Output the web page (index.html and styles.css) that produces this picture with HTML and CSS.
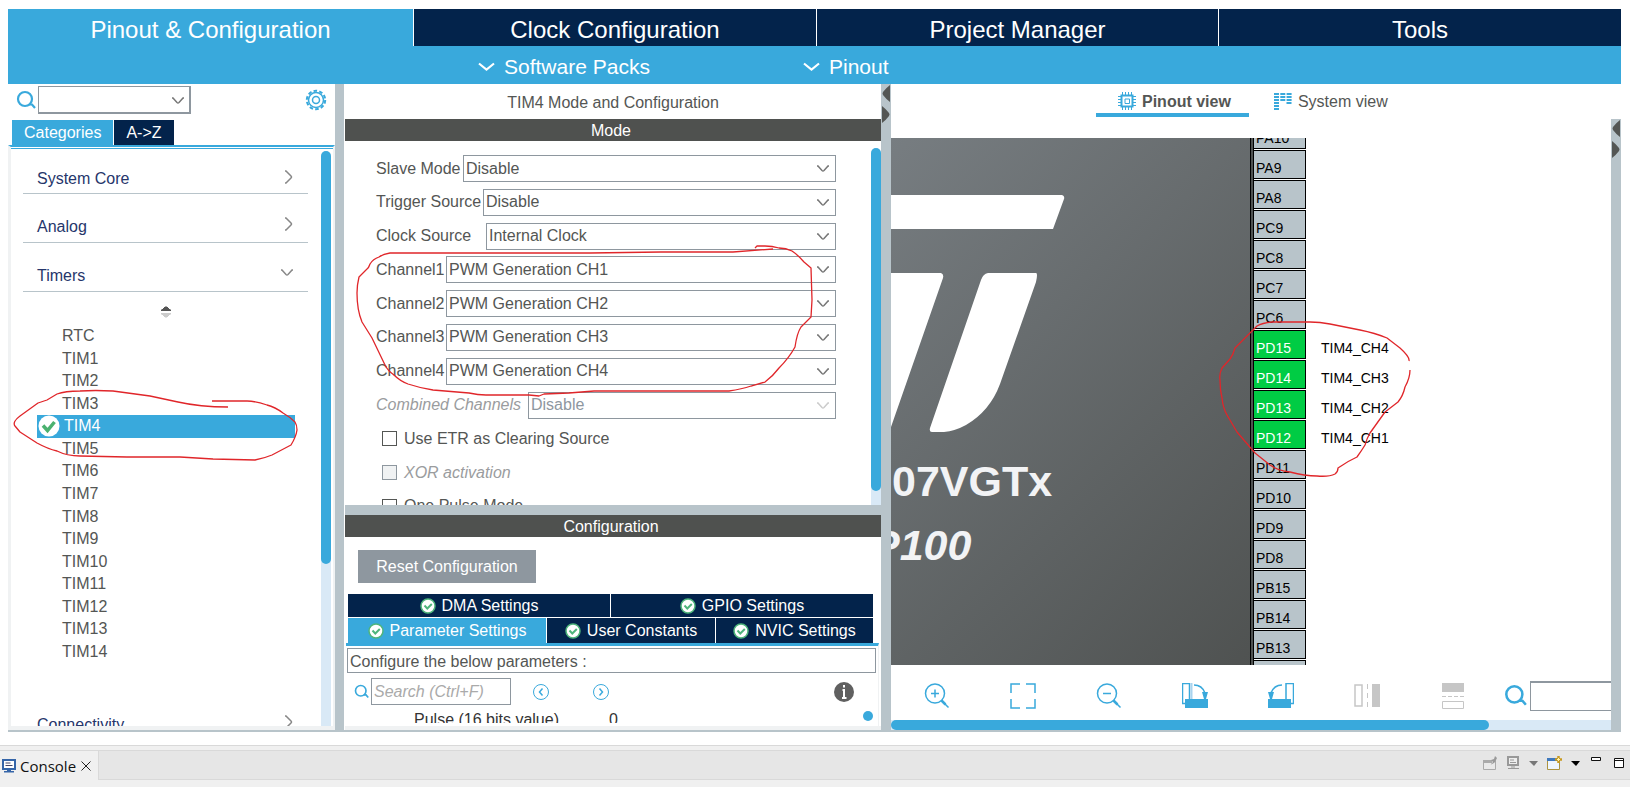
FILE: index.html
```html
<!DOCTYPE html>
<html lang="en">
<head>
<meta charset="utf-8">
<title>Pinout &amp; Configuration</title>
<link rel="stylesheet" href="styles.css">
</head>
<body>
<svg class="defs" aria-hidden="true">
  <symbol id="i-down" viewBox="0 0 14 8"><path d="M1 1h1l4 4.500q1 1 2 0L12 1h1" fill="none" stroke="currentColor" stroke-width="1.500"/></symbol>
  <symbol id="i-right" viewBox="0 0 10 14"><path d="M1 1h1l5 5q1 1 0 2l-5 5H1" fill="none" stroke="currentColor" stroke-width="1.500"/></symbol>
  <symbol id="i-search" viewBox="0 0 20 20"><circle cx="9" cy="9" r="7" fill="none" stroke="#39a9dc" stroke-width="2.200"/><path d="M13 14.500h3l3 3.500" fill="none" stroke="#39a9dc" stroke-width="2.200"/></symbol>
  <symbol id="i-ok" viewBox="0 0 16 16"><circle cx="8" cy="8" r="7" fill="#fff" stroke="#4fb57c" stroke-width="1.500"/><path d="M4.500 7.500l2.800 3 4.500-4.500" fill="none" stroke="#4fb57c" stroke-width="2"/></symbol>
  <symbol id="i-split" viewBox="0 0 10 40"><path d="M9 1v17Q5 15 2 11q-1-1.500 0-3 3-4 7-7zM1 22v17q4-3 7-7 1-1.500 0-3-3-4-7-7z" fill="#545654"/></symbol>
</svg>

<main class="app">
  <nav class="maintabs">
    <button class="maintab active">Pinout &amp; Configuration</button>
    <button class="maintab">Clock Configuration</button>
    <button class="maintab">Project Manager</button>
    <button class="maintab">Tools</button>
  </nav>
  <div class="subbar">
    <button class="submenu packs"><svg width="17" height="10" viewBox="0 0 17 10"><path d="M1 1.500l7.500 6 7.500-6" fill="none" stroke="#fff" stroke-width="2.200"/></svg>Software Packs</button>
    <button class="submenu"><svg width="17" height="10" viewBox="0 0 17 10"><path d="M1 1.500l7.500 6 7.500-6" fill="none" stroke="#fff" stroke-width="2.200"/></svg>Pinout</button>
  </div>

  <div class="workspace">
    <aside class="sidebar">
      <div class="finder">
        <svg width="20" height="20"><use href="#i-search"/></svg>
        <div class="combo finder-combo"><select aria-label="Find peripheral"><option></option></select><svg class="arrow" width="14" height="8"><use href="#i-down"/></svg></div>
        <button class="gear" aria-label="Settings"><svg width="22" height="22" viewBox="0 0 22 22" fill="none" stroke="#39a9dc"><circle cx="11" cy="11" r="9.200" stroke-width="2" stroke-dasharray="3.600 2.200"/><circle cx="11" cy="11" r="7.500" stroke-width="1.500"/><circle cx="11" cy="11" r="3.500" stroke-width="1.500"/></svg></button>
      </div>
      <div class="sidetabs"><button class="sidetab active">Categories</button><button class="sidetab">A-&gt;Z</button></div>
      <div class="tree">
        <div class="tree-body">
          <button class="group">System Core<svg width="10" height="14"><use href="#i-right"/></svg></button>
          <button class="group">Analog<svg width="10" height="14"><use href="#i-right"/></svg></button>
          <button class="group">Timers<svg width="14" height="8"><use href="#i-down"/></svg></button>
          <div class="sorter"><svg width="10" height="12" viewBox="0 0 10 12"><path d="M0 4.500h10V4H9L6 1H4L1 4H0z" fill="#555" stroke="#555"/><path d="M0 7.500h10V8H9l-3 3H4L1 8H0z" fill="#ccc" stroke="#ccc"/></svg></div>
          <ul class="timers">
            <li>RTC</li><li>TIM1</li><li>TIM2</li><li>TIM3</li>
            <li class="selected"><svg width="22" height="22" viewBox="0 0 22 22"><circle cx="11" cy="11" r="10.500" fill="#fff"/><path d="M5 10.500l4.500 5L16.500 7" fill="none" stroke="#4bb16f" stroke-width="3.500"/></svg>TIM4</li>
            <li>TIM5</li><li>TIM6</li><li>TIM7</li><li>TIM8</li><li>TIM9</li><li>TIM10</li><li>TIM11</li><li>TIM12</li><li>TIM13</li><li>TIM14</li>
          </ul>
          <button class="group last">Connectivity<svg width="10" height="14"><use href="#i-right"/></svg></button>
        </div>
        <div class="track"><div class="thumb tree-thumb"></div></div>
      </div>
    </aside>

    <div class="divider"></div>

    <section class="settings">
      <h1 class="title">TIM4 Mode and Configuration</h1>
      <h2 class="bar">Mode</h2>
      <div class="mode">
        <form class="fields">
          <div class="field"><label class="w-slave" for="f1">Slave Mode</label><div class="combo"><select id="f1"><option>Disable</option></select><svg class="arrow" width="14" height="8"><use href="#i-down"/></svg></div></div>
          <div class="field"><label class="w-trig" for="f2">Trigger Source</label><div class="combo"><select id="f2"><option>Disable</option></select><svg class="arrow" width="14" height="8"><use href="#i-down"/></svg></div></div>
          <div class="field"><label class="w-clock" for="f3">Clock Source</label><div class="combo"><select id="f3"><option>Internal Clock</option></select><svg class="arrow" width="14" height="8"><use href="#i-down"/></svg></div></div>
          <div class="field"><label class="w-chan" for="f4">Channel1</label><div class="combo"><select id="f4"><option>PWM Generation CH1</option></select><svg class="arrow" width="14" height="8"><use href="#i-down"/></svg></div></div>
          <div class="field"><label class="w-chan" for="f5">Channel2</label><div class="combo"><select id="f5"><option>PWM Generation CH2</option></select><svg class="arrow" width="14" height="8"><use href="#i-down"/></svg></div></div>
          <div class="field"><label class="w-chan" for="f6">Channel3</label><div class="combo"><select id="f6"><option>PWM Generation CH3</option></select><svg class="arrow" width="14" height="8"><use href="#i-down"/></svg></div></div>
          <div class="field"><label class="w-chan" for="f7">Channel4</label><div class="combo"><select id="f7"><option>PWM Generation CH4</option></select><svg class="arrow" width="14" height="8"><use href="#i-down"/></svg></div></div>
          <div class="field off"><label class="w-comb" for="f8">Combined Channels</label><div class="combo"><select id="f8" disabled><option>Disable</option></select><svg class="arrow" width="14" height="8"><use href="#i-down"/></svg></div></div>
          <div class="field check"><input type="checkbox" id="c1"><label for="c1">Use ETR as Clearing Source</label></div>
          <div class="field check off"><input type="checkbox" id="c2" disabled><label for="c2">XOR activation</label></div>
          <div class="field check"><input type="checkbox" id="c3"><label for="c3">One Pulse Mode</label></div>
        </form>
        <div class="track"><div class="thumb mode-thumb"></div></div>
      </div>
      <div class="hdivider"></div>
      <h2 class="bar">Configuration</h2>
      <div class="config">
        <button class="reset">Reset Configuration</button>
        <div class="ctabs">
          <button class="ctab"><svg width="16" height="16"><use href="#i-ok"/></svg>DMA Settings</button>
          <button class="ctab"><svg width="16" height="16"><use href="#i-ok"/></svg>GPIO Settings</button>
        </div>
        <div class="ctabs second">
          <button class="ctab active"><svg width="16" height="16"><use href="#i-ok"/></svg>Parameter Settings</button>
          <button class="ctab"><svg width="16" height="16"><use href="#i-ok"/></svg>User Constants</button>
          <button class="ctab"><svg width="16" height="16"><use href="#i-ok"/></svg>NVIC Settings</button>
        </div>
        <div class="params">
          <div class="hint">Configure the below parameters :</div>
          <div class="psearch">
            <svg width="15" height="15"><use href="#i-search"/></svg>
            <input type="text" placeholder="Search (Ctrl+F)" aria-label="Search parameters">
            <button class="nav prev" aria-label="Previous"><svg width="18" height="18" viewBox="0 0 18 18" fill="none" stroke="#39a9dc"><circle cx="9" cy="9" r="7.500"/><path d="M10.500 5.500L7.500 9l3 3.500" stroke-width="1.500"/></svg></button>
            <button class="nav" aria-label="Next"><svg width="18" height="18" viewBox="0 0 18 18" fill="none" stroke="#39a9dc"><circle cx="9" cy="9" r="7.500"/><path d="M7.500 5.500l3 3.500-3 3.500" stroke-width="1.500"/></svg></button>
            <button class="nav info" aria-label="Information"><svg width="20" height="20" viewBox="0 0 20 20"><circle cx="10" cy="10" r="10" fill="#606060"/><path d="M10 3v2.500M8.500 8H10v7.500M8 16h4.500" stroke="#fff" stroke-width="2" fill="none"/></svg></button>
          </div>
          <div class="prow"><span class="pname">Pulse (16 bits value)</span><span>0</span><i class="dot"></i></div>
        </div>
      </div>
    </section>

    <div class="divider"><svg width="10" height="40"><use href="#i-split"/></svg></div>

    <section class="viewer">
      <nav class="views">
        <button class="view active"><svg width="18" height="18" viewBox="0 0 18 18" fill="none" stroke="#39a9dc"><path d="M3.500 3.500h11v11h-11z" stroke-width="2"/><path d="M7 7h4.500v4.500H7z"/><path d="M4.500 0v3m3-3v3m3-3v3m3-3v3M4.500 15v3m3-3v3m3-3v3m3-3v3M0 4.500h3m-3 3h3m-3 3h3m-3 3h3M15 4.500h3m-3 3h3m-3 3h3m-3 3h3"/></svg>Pinout view</button>
        <button class="view"><svg width="18" height="18" viewBox="0 0 18 18" fill="none" stroke="#39a9dc" stroke-width="2"><path d="M0 2h18M0 5h18M0 8h18M0 11h5M12.500 11h5.500M0 14h5M0 17h5" stroke-dasharray="5 1.300"/></svg>System view</button>
      </nav>
      <div class="stage">
        <div class="canvas">
          <div class="package">
            <svg class="logo" width="362" height="300" viewBox="0 0 362 300" fill="#fff"><path d="M0 57h171q3 1 2 4l-11 30H0zM0 135h50q3 1 2 5L0 289zM97 135h48q2 0 0 9l-36 102q-10 27-34 41-11 6-22 7H41q-3 0-2-4L90 142q2-6 7-7z"/></svg>
            <span class="part">07VGTx</span>
            <span class="case">P100</span>
          </div>
          <ul class="pins">
            <li><b>PA10</b></li><li><b>PA9</b></li><li><b>PA8</b></li><li><b>PC9</b></li><li><b>PC8</b></li><li><b>PC7</b></li><li><b>PC6</b></li>
            <li class="used"><b>PD15</b><span>TIM4_CH4</span></li><li class="used"><b>PD14</b><span>TIM4_CH3</span></li><li class="used"><b>PD13</b><span>TIM4_CH2</span></li><li class="used"><b>PD12</b><span>TIM4_CH1</span></li>
            <li><b>PD11</b></li><li><b>PD10</b></li><li><b>PD9</b></li><li><b>PD8</b></li><li><b>PB15</b></li><li><b>PB14</b></li><li><b>PB13</b></li><li><b></b></li>
          </ul>
        </div>
        <div class="tools">
          <button aria-label="Zoom in"><svg width="26" height="26" viewBox="0 0 26 26" fill="none" stroke="#39a9dc" stroke-width="1.500"><circle cx="11" cy="10.500" r="9.500"/><path d="M11 6.500v8M7 10.500h8M17.500 17.500l7 7"/><path d="M17.500 17.500l4 4" stroke-width="2.500"/></svg></button>
          <button aria-label="Best fit"><svg width="26" height="26" viewBox="0 0 26 26" fill="none" stroke="#39a9dc" stroke-width="1.500"><path d="M1 10V1h9M16 1h9v9M25 16v9h-9M10 25H1v-9"/></svg></button>
          <button aria-label="Zoom out"><svg width="26" height="26" viewBox="0 0 26 26" fill="none" stroke="#39a9dc" stroke-width="1.500"><circle cx="11" cy="10.500" r="9.500"/><path d="M7 10.500h8M17.500 17.500l7 7"/><path d="M17.500 17.500l4 4" stroke-width="2.500"/></svg></button>
          <button aria-label="Rotate right"><svg width="26" height="26" viewBox="0 0 26 26" fill="none" stroke="#39a9dc"><path d="M.500.500h7v20h-7z" stroke-width="1.500"/><path d="M9.500 0v16" stroke="#a9d3ee" stroke-width="2"/><path d="M3 16h23v9H3z" fill="#39a9dc" stroke="none"/><path d="M12 2q8 0 11 8" stroke-width="1.500"/><path d="M20 9h6l-2 7h-2z" fill="#39a9dc" stroke="none"/></svg></button>
          <button aria-label="Rotate left"><svg width="26" height="26" viewBox="0 0 26 26" fill="none" stroke="#39a9dc"><path d="M18 .500h7.500v20H18z" stroke-width="1.500"/><path d="M0 16h23v9H0z" fill="#39a9dc" stroke="none"/><path d="M14 2Q6 2 3 10" stroke-width="1.500"/><path d="M0 9h6l-2 7H2z" fill="#39a9dc" stroke="none"/></svg></button>
          <button aria-label="Flip horizontally"><svg width="26" height="26" viewBox="0 0 26 26" fill="none" stroke="#c6c6c6"><path d="M1 2h7v21H1z" stroke-width="1.500"/><path d="M13.500 1v23" stroke-dasharray="5 4"/><path d="M18 1h8v23h-8z" fill="#c6c6c6" stroke="none"/></svg></button>
          <button aria-label="Flip vertically"><svg width="26" height="26" viewBox="0 0 26 26" fill="none" stroke="#c6c6c6"><path d="M2 0h22v9H2z" fill="#c6c6c6" stroke="none"/><path d="M2 13.500h22" stroke-dasharray="4 2"/><path d="M2.500 18.500h21v7h-21z"/></svg></button>
          <label class="pinfind"><svg width="23" height="23"><use href="#i-search"/></svg><input type="text" aria-label="Find pin"></label>
        </div>
        <div class="hscroll"><div class="hthumb"></div></div>
        <div class="edge"><svg width="10" height="40"><use href="#i-split"/></svg></div>
      </div>
    </section>
  </div>
</main>

<footer class="console">
  <div class="ctop">
    <div class="ctitle">
      <svg width="14" height="14" viewBox="0 0 14 14"><path d="M1 1h12v9H1z" fill="#fff" stroke="#3565a8" stroke-width="2"/><path d="M3.500 4h5M3.500 6.500h7" stroke="#446"/><path d="M5 10h4v2h3v1.500H2V12h3z" fill="#3565a8"/></svg>
      <span>Console</span>
      <button aria-label="Close"><svg width="10" height="10" viewBox="0 0 10 10"><path d="M.500.500l9 9M9.500.500l-9 9" stroke="#222"/></svg></button>
    </div>
    <div class="cbuttons">
      <svg width="14" height="14" viewBox="0 0 14 14"><path d="M.500 4.500h12v9H.500z" fill="#e9e9e9" stroke="#aaa"/><path d="M0 4h9v3H0z" fill="#aaa"/><path d="M7 9l3-3-2-2 3-1 1-3 2 2-2 4-1 1" fill="#999"/></svg>
      <svg width="14" height="14" viewBox="0 0 14 14"><path d="M2 1h10v8H2z" fill="#eee" stroke="#999" stroke-width="2"/><path d="M4 4h4M4 6.500h6M2 12.500h11M5 11h4" stroke="#999"/></svg>
      <svg width="9" height="5"><path d="M0 0h9L5 5z" fill="#777"/></svg>
      <svg width="15" height="14" viewBox="0 0 15 14"><path d="M.500 2.500h12v11H.500z" fill="#eef6ff" stroke="#ad9440"/><path d="M0 2h10v3H0z" fill="#3f79bd"/><path d="M11.500 0v7M8 3.500h7" stroke="#c99a20" stroke-width="2.500"/><path d="M11.500 2v3M10 3.500h3" stroke="#fff4b0"/></svg>
      <svg width="9" height="5"><path d="M0 0h9L5 5z" fill="#000"/></svg>
      <svg class="min" width="10" height="14"><path d="M.500 1.500h9v3h-9z" fill="#fff" stroke="#111"/></svg>
      <svg width="10" height="12"><path d="M.500 1.500h9v9h-9zM1 3.500h8" fill="#fff" stroke="#111"/></svg>
    </div>
  </div>
  <p class="cmsg">No consoles to display at this time.</p>
</footer>

<svg class="marks" width="1630" height="787" viewBox="0 0 1630 787" fill="none" stroke="#e0262a" stroke-width="1.300" stroke-linejoin="round" aria-hidden="true">
  <path d="M228 407Q200 407 178 402L150 396 113 391Q95 390 80 391 65 391 57 394L47 400 38 403 20 416Q12 422 15 426L20 432 37 443Q48 449 57 451 67 456 80 456L127 457 180 457 213 459 255 460Q265 458 272 455L291 445Q296 437 297 430 297 425 295 422 290 417 283 413 275 407 267 405 255 401 247 401H212"/>
  <path d="M773 249L733 252 661 252 590 253H390Q383 254 379 257 373 259 370 264 369 268 366 270L359 277Q357 285 357 293 357 310 362 322L372 338 385 365Q388 371 394 375 400 381 408 384 420 388 433 390L469 393Q478 395 486 395L529 395 539 396 544 394 569 393 594 391H729Q742 389 751 386L765 382Q773 376 779 368 789 358 795 347 797 333 801 327L811 317 812 300 811 268 804 262Q798 255 792 251 786 248 779 248 772 246 765 246H757L755 248"/>
  <path d="M1409 361Q1410 357 1400 348L1387 338Q1375 333 1360 330L1330 324Q1320 322 1310 322H1272Q1262 323 1257 326L1235 348Q1233 355 1230 359L1222 368Q1219 374 1220 380 1220 390 1222 398 1223 408 1227 415L1237 432 1255 453 1270 465Q1278 471 1290 472 1305 476 1317 476 1329 477 1335 474 1338 472 1338 468 1348 461 1357 457 1362 450 1365 445 1367 438 1370 433L1385 412 1398 402Q1403 396 1405 387 1410 378 1410 370"/>
</svg>
</body>
</html>
```
FILE: styles.css
```css
* { box-sizing: border-box; }

body {
  margin: 0;
  height: 100vh;
  display: flex;
  flex-direction: column;
  overflow: hidden;
  background: #fff;
  color: #545654;
  font: 16px/20px "Liberation Sans", Arial, sans-serif;
}

button, input, select { font: inherit; color: inherit; border-radius: 0; margin: 0; }
button { border: 0; padding: 0; background: none; display: flex; align-items: center; }
ul { list-style: none; margin: 0; padding: 0; }
svg { display: block; flex: none; }
.defs { position: absolute; width: 0; height: 0; }
.marks { position: absolute; left: 0; top: 0; pointer-events: none; }

/* header */
.app { flex: 1; min-height: 0; margin: 9px 9px 13px 8px; display: flex; flex-direction: column; }
.maintabs { display: grid; grid-template-columns: 405fr 402fr 401fr 402fr; gap: 1px; }
.maintab { height: 37px; padding-top: 4px; justify-content: center; background: #03234b; color: #fff; font-size: 24px; }
.maintab.active { background: #39a9dc; }
.subbar { height: 38px; background: #39a9dc; display: flex; padding-left: 470px; }
.submenu { color: #fff; font-size: 21px; gap: 9px; padding-top: 4px; }
.submenu.packs { width: 325px; }

.workspace {
  flex: 1;
  min-height: 0;
  display: grid;
  grid-template-columns: 327px 9px 537px 10px 1fr;
  border-bottom: 2px solid #b8c4ca;
}
.divider { background: #b8c4ca; }

/* drop-downs */
.combo { position: relative; flex: 1; color: #545654; }
.combo select {
  appearance: none;
  display: block;
  width: 100%;
  height: 27px;
  padding: 0 2px;
  border: 1px solid #8e979f;
  background: #fff;
  opacity: 1;
}
.combo .arrow { position: absolute; right: 6px; top: 10px; color: #777; pointer-events: none; }

/* scrollbars */
.track { width: 10px; background: #d9e9f6; border-radius: 5px 5px 0 0; }
.thumb { background: #39a9dc; border-radius: 5px; }
.tree-thumb { height: 413px; }
.mode-thumb { height: 343px; }

/* sidebar */
.sidebar { display: flex; flex-direction: column; min-height: 0; overflow: hidden; }
.finder { display: flex; align-items: center; height: 32px; padding: 0 8px; gap: 2px; }
.finder-combo { flex: none; width: 153px; }
.finder-combo select { border-width: 1px 2px 2px 1px; height: 28px; }
.finder .arrow { top: 11px; }
.gear { margin-left: auto; }
.sidetabs { display: flex; gap: 1px; padding: 4px 4px 0; height: 29px; }
.sidetab { height: 25px; padding: 0 12px; background: #03234b; color: #fff; }
.sidetab.active { background: #39a9dc; }
.tree {
  flex: 1;
  min-height: 0;
  display: flex;
  padding: 4px 2px 0 0;
  border: solid #f0f2f3;
  border-width: 2px 2px 4px 3px;
  border-top-color: #39a9dc;
  box-shadow: inset 0 1px #fff, inset 0 2px #39a9dc;
}
.tree-body { flex: 1; min-width: 0; overflow: hidden; padding: 0 13px 0 12px; }
.group { width: 100%; height: 49px; padding: 17px 14px 0; justify-content: space-between; border-bottom: 1px solid #b8c4ca; color: #26366b; text-align: left; }
.group:first-child { height: 43px; padding-top: 14px; }
.group svg { color: #888; margin-top: -5px; }
.sorter { height: 27px; margin-top: 6px; display: flex; justify-content: center; align-items: center; }
.timers { display: grid; grid-template-rows: repeat(15, 1fr); height: 338px; padding: 0 13px 0 14px; }
.timers li { padding-left: 25px; display: flex; align-items: center; }
.timers .selected { background: #39a9dc; color: #fff; padding-left: 1px; gap: 4px; }
.group.last { margin-top: 29px; }

/* mode and configuration */
.settings { display: flex; flex-direction: column; min-height: 0; overflow: hidden; padding-left: 1px; }
.title { margin: 0; font: inherit; text-align: center; height: 35px; line-height: 37px; }
.bar { margin: 0; background: #4f514f; color: #fff; text-align: center; font: inherit; height: 22px; line-height: 24px; flex: none; padding-right: 4px; }
.mode { height: 364px; flex: none; display: flex; padding-top: 7px; overflow: hidden; }
.fields { flex: 1; height: 372px; padding: 7px 35px 0 31px; display: flex; flex-direction: column; justify-content: space-between; }
.field { display: flex; align-items: center; height: 27px; flex: none; white-space: nowrap; }
.w-slave { width: 87px; }
.w-trig { width: 107px; }
.w-clock { width: 110px; }
.w-chan { width: 70px; }
.w-comb { width: 152px; }
.off label { color: #9a9c9e; font-style: italic; }
.off select { color: #8e979f; }
.off .arrow { color: #ccc; }
.check { padding-left: 6px; gap: 7px; }
.check input { appearance: none; width: 15px; height: 15px; border: 1px solid #545654; background: #fff; }
.check input:disabled { background: #f0f2f3; border-color: #8e979f; }
.hdivider { height: 10px; background: #b8c4ca; flex: none; }
.config { flex: 1; min-height: 0; display: flex; flex-direction: column; padding: 13px 2px 0 1px; border-bottom: 4px solid #f0f2f3; }
.reset { width: 178px; height: 33px; flex: none; margin: 0 0 11px 12px; background: #8e979f; color: #fff; justify-content: center; }
.ctabs { display: grid; grid-template-columns: 1fr 1fr; gap: 1px; margin: 0 6px 1px 2px; height: 23px; flex: none; }
.ctabs.second { grid-template-columns: 198fr 168fr 157fr; height: 25px; margin-bottom: 0; }
.ctab { justify-content: center; gap: 6px; background: #03234b; color: #fff; white-space: nowrap; }
.ctab.active { background: #39a9dc; }
.params { flex: 1; min-height: 0; overflow: hidden; border-top: 3px solid #39a9dc; padding: 2px 2px 0 1px; border-right: 1px solid #f0f2f3; }
.hint { border: 1px solid #8e979f; height: 25px; padding: 0 2px; line-height: 25px; }
.psearch { display: flex; align-items: center; height: 37px; padding: 0 22px 0 7px; }
.psearch input { width: 140px; height: 27px; margin-left: 2px; padding: 0 2px; border: 1px solid #8e979f; font-style: italic; }
.psearch input::placeholder { color: #aaa; opacity: 1; }
.nav { margin-left: 21px; }
.nav + .nav { margin-left: 42px; }
.nav + .info { margin-left: auto; }
.prow { display: flex; height: 13px; overflow: hidden; color: #333; padding: 0 3px 0 67px; }
.pname { width: 195px; }
.dot { width: 10px; height: 10px; border-radius: 5px; background: #39a9dc; margin: 1px 0 0 auto; }

/* chip viewer */
.viewer { display: flex; flex-direction: column; min-width: 0; min-height: 0; }
.views { display: flex; height: 35px; padding-left: 205px; gap: 1px; }
.view { height: 33px; padding: 7px 18px 0 24px; gap: 6px; border-bottom: 4px solid transparent; }
.view svg { margin-top: -3px; }
.view.active { font-weight: bold; border-color: #39a9dc; padding-left: 22px; }
.stage { flex: 1; min-height: 0; display: grid; grid-template-columns: 1fr 10px; grid-template-rows: 1fr 55px 10px; }
.canvas { display: flex; margin-top: 19px; overflow: hidden; min-height: 0; }
.package { position: relative; width: 363px; border-right: 1px solid #000; box-shadow: inset -2px 0 #4f5251, inset -3px 0 #000; background: linear-gradient(135deg, #777d81, #4f5251); overflow: hidden; flex: none; }
.logo { position: absolute; left: 0; top: 0; }
.part, .case { position: absolute; color: #f2f3f5; font-weight: bold; font-size: 43px; line-height: 50px; white-space: nowrap; }
.part { left: 1px; top: 318px; }
.case { left: -20px; top: 382px; font-style: italic; }
.pins { font-size: 14px; margin-top: -18px; }
.pins li { height: 29px; margin-bottom: 1px; display: flex; color: #000; }
.pins b { width: 52px; border: 1px solid #000; border-left: 0; background: #b8c4ca; font-weight: normal; padding: 8px 0 0 2px; line-height: 18px; }
.pins span { padding: 9px 0 0 15px; line-height: 18px; }
.used b { background: #00cc44; color: #fff; }
.tools { grid-column: 1; display: flex; align-items: center; padding: 6px 0 0 33px; gap: 60px; min-width: 0; overflow: hidden; }
.pinfind { display: flex; align-items: center; gap: 3px; margin-left: -22px; flex: 1; min-width: 0; }
.pinfind input { width: 130px; height: 30px; flex: none; border: 1px solid #8e979f; border-top-width: 2px; }
.hscroll { grid-column: 1; background: #d9e9f6; }
.hthumb { width: 83%; height: 10px; border-radius: 5px; background: #39a9dc; }
.edge { grid-column: 2; grid-row: 1 / 4; background: #b8c4ca; }

/* console */
.console { height: 42px; flex: none; overflow: hidden; border-top: 1px solid #d9d9d9; padding-top: 4px; background: #f0f0f0; color: #111; font: 15px/20px "Open Sans", sans-serif; }
.ctop { display: flex; height: 30px; border-top: 1px solid #d9d9d9; border-bottom: 1px solid #d9d9d9; background: #e6e6e6; }
.ctitle { width: 99px; height: 29px; display: flex; align-items: center; gap: 4px; padding-left: 2px; background: #f0f0f0; border-right: 1px solid #d9d9d9; }
.ctitle span { width: 57px; }
.cbuttons { margin-left: auto; display: flex; align-items: center; gap: 9px; padding: 0 6px 4px 0; }
.cbuttons .min { margin: 0 4px 0 2px; }
.cmsg { margin: 2px 0 0; }
```
